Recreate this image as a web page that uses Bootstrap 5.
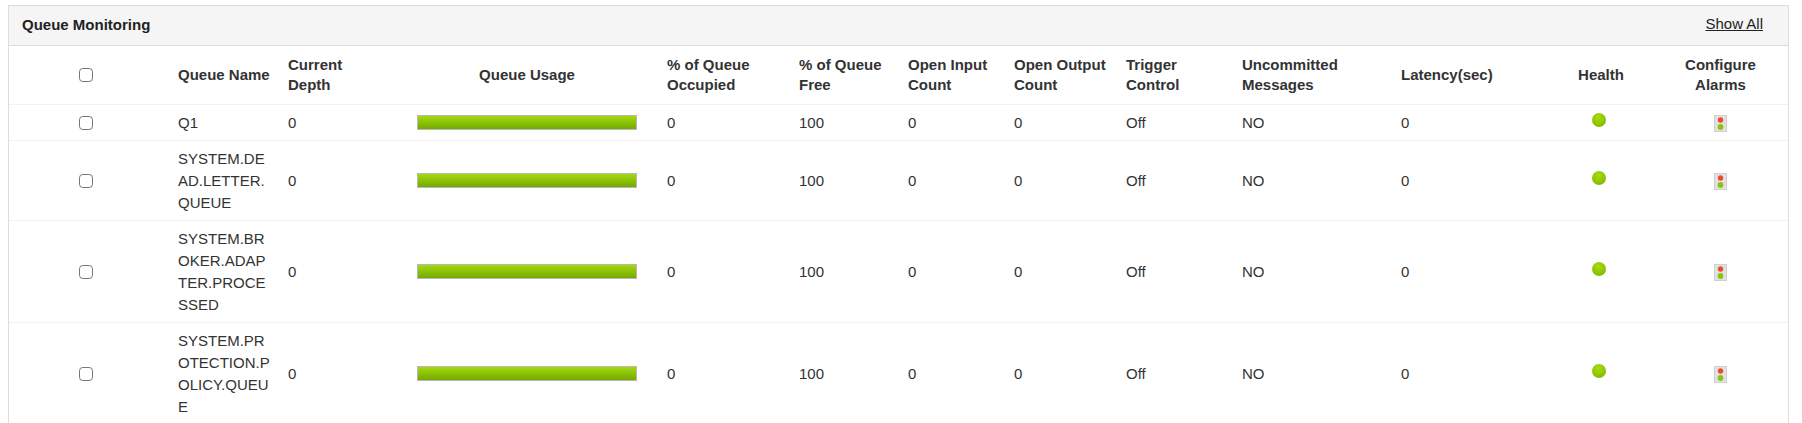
<!DOCTYPE html>
<html lang="en">
<head>
  <meta charset="UTF-8" />
  <title>Queue Monitoring</title>
  <meta name="viewport" content="width=device-width, initial-scale=1">
  <link href="https://cdn.jsdelivr.net/npm/bootstrap@5.3.3/dist/css/bootstrap.min.css" rel="stylesheet">
  <script src="https://cdn.jsdelivr.net/npm/bootstrap@5.3.3/dist/js/bootstrap.bundle.min.js"></script>
  <style>
    body { font-family: "Liberation Sans", Arial, sans-serif; font-size: 15px; color: #333; background: #fff; overflow: hidden; }
    .page-wrap { padding: 5px 13px 0 8px; }
    .queue-panel { border: 1px solid #ddd; border-radius: 0; border-bottom: 0; }
    .queue-head { height: 40px; background: #f5f5f5; border-bottom: 1px solid #ddd; border-radius: 0 !important; padding: 0 25px 0 13px; }
    .queue-title { font-size: 15px; font-weight: 700; color: #222; }
    .show-all { font-size: 15px; color: #222; margin-top: -2px; }
    .queue-table { table-layout: fixed; width: 100%; margin: 0; color: #333; }
    .queue-table th { font-size: 15px; font-weight: 700; line-height: 20px; padding: 9px 8px; border-bottom: 1px solid #f2f2f2; color: #333; vertical-align: middle; }
    .queue-table td { font-size: 15px; line-height: 22px; padding: 7px 8px 6px; border-bottom: 1px solid #f2f2f2; color: #333; }
    .queue-table .check-cell { padding-right: 15px; }
    .queue-table .usage-cell { padding-right: 13px; }
    .queue-table .dot-cell { padding-right: 12px; }
    .name-cell { word-break: break-all; }
    .row-check { width: 14px; height: 14px; margin: -2px 0 0; border: 1px solid #767676; border-radius: 3px; float: none; vertical-align: middle; }
    .usage-bar { width: 220px; height: 15px; margin: -2px auto 0; border: 1px solid #b8b8b8; background: linear-gradient(#a4d90f, #74aa00); }
    .health-dot { display: block; width: 14px; height: 14px; margin: -6px auto 0; border-radius: 50%; background: radial-gradient(circle at 45% 30%, #a9dc0c, #7fb800 85%); }
    .alarm-icon { display: block; width: 13px; height: 17px; margin: 0 auto; }
  </style>
</head>
<body>
  <div class="page-wrap">
    <div class="card queue-panel">
      <div class="card-header queue-head d-flex justify-content-between align-items-center">
        <span class="queue-title">Queue Monitoring</span>
        <a href="#" class="show-all">Show All</a>
      </div>
      <table class="table queue-table align-middle">
        <colgroup>
          <col style="width:161px"><col style="width:110px"><col style="width:120px"><col style="width:259px">
          <col style="width:132px"><col style="width:109px"><col style="width:106px"><col style="width:112px">
          <col style="width:116px"><col style="width:159px"><col style="width:156px"><col style="width:104px"><col>
        </colgroup>
        <thead>
          <tr>
            <th class="text-center check-cell"><input type="checkbox" class="form-check-input row-check"></th>
            <th>Queue Name</th>
            <th>Current<br>Depth</th>
            <th class="text-center usage-cell">Queue Usage</th>
            <th>% of Queue<br>Occupied</th>
            <th>% of Queue<br>Free</th>
            <th>Open Input<br>Count</th>
            <th>Open Output<br>Count</th>
            <th>Trigger<br>Control</th>
            <th>Uncommitted<br>Messages</th>
            <th>Latency(sec)</th>
            <th class="text-center">Health</th>
            <th class="text-center">Configure<br>Alarms</th>
          </tr>
        </thead>
        <tbody>
          <tr>
            <td class="text-center check-cell"><input type="checkbox" class="form-check-input row-check"></td>
            <td class="name-cell">Q1</td><td>0</td>
            <td class="usage-cell"><div class="usage-bar"></div></td>
            <td>0</td><td>100</td><td>0</td><td>0</td><td>Off</td><td>NO</td><td>0</td>
            <td class="dot-cell"><span class="health-dot"></span></td>
            <td><svg class="alarm-icon" viewBox="0 0 13 17"><rect x=".5" y=".5" width="12" height="16" fill="#e2e2e2" stroke="#cfcfcf"/><circle cx="6.5" cy="5" r="2.7" fill="#ee4b2b"/><circle cx="6.5" cy="12" r="2.9" fill="#8cc414"/></svg></td>
          </tr>
          <tr>
            <td class="text-center check-cell"><input type="checkbox" class="form-check-input row-check"></td>
            <td class="name-cell">SYSTEM.DEAD.LETTER.QUEUE</td><td>0</td>
            <td class="usage-cell"><div class="usage-bar"></div></td>
            <td>0</td><td>100</td><td>0</td><td>0</td><td>Off</td><td>NO</td><td>0</td>
            <td class="dot-cell"><span class="health-dot"></span></td>
            <td><svg class="alarm-icon" viewBox="0 0 13 17"><rect x=".5" y=".5" width="12" height="16" fill="#e2e2e2" stroke="#cfcfcf"/><circle cx="6.5" cy="5" r="2.7" fill="#ee4b2b"/><circle cx="6.5" cy="12" r="2.9" fill="#8cc414"/></svg></td>
          </tr>
          <tr>
            <td class="text-center check-cell"><input type="checkbox" class="form-check-input row-check"></td>
            <td class="name-cell">SYSTEM.BROKER.ADAPTER.PROCESSED</td><td>0</td>
            <td class="usage-cell"><div class="usage-bar"></div></td>
            <td>0</td><td>100</td><td>0</td><td>0</td><td>Off</td><td>NO</td><td>0</td>
            <td class="dot-cell"><span class="health-dot"></span></td>
            <td><svg class="alarm-icon" viewBox="0 0 13 17"><rect x=".5" y=".5" width="12" height="16" fill="#e2e2e2" stroke="#cfcfcf"/><circle cx="6.5" cy="5" r="2.7" fill="#ee4b2b"/><circle cx="6.5" cy="12" r="2.9" fill="#8cc414"/></svg></td>
          </tr>
          <tr>
            <td class="text-center check-cell"><input type="checkbox" class="form-check-input row-check"></td>
            <td class="name-cell">SYSTEM.PROTECTION.POLICY.QUEUE</td><td>0</td>
            <td class="usage-cell"><div class="usage-bar"></div></td>
            <td>0</td><td>100</td><td>0</td><td>0</td><td>Off</td><td>NO</td><td>0</td>
            <td class="dot-cell"><span class="health-dot"></span></td>
            <td><svg class="alarm-icon" viewBox="0 0 13 17"><rect x=".5" y=".5" width="12" height="16" fill="#e2e2e2" stroke="#cfcfcf"/><circle cx="6.5" cy="5" r="2.7" fill="#ee4b2b"/><circle cx="6.5" cy="12" r="2.9" fill="#8cc414"/></svg></td>
          </tr>
        </tbody>
      </table>
    </div>
  </div>
</body>
</html>
